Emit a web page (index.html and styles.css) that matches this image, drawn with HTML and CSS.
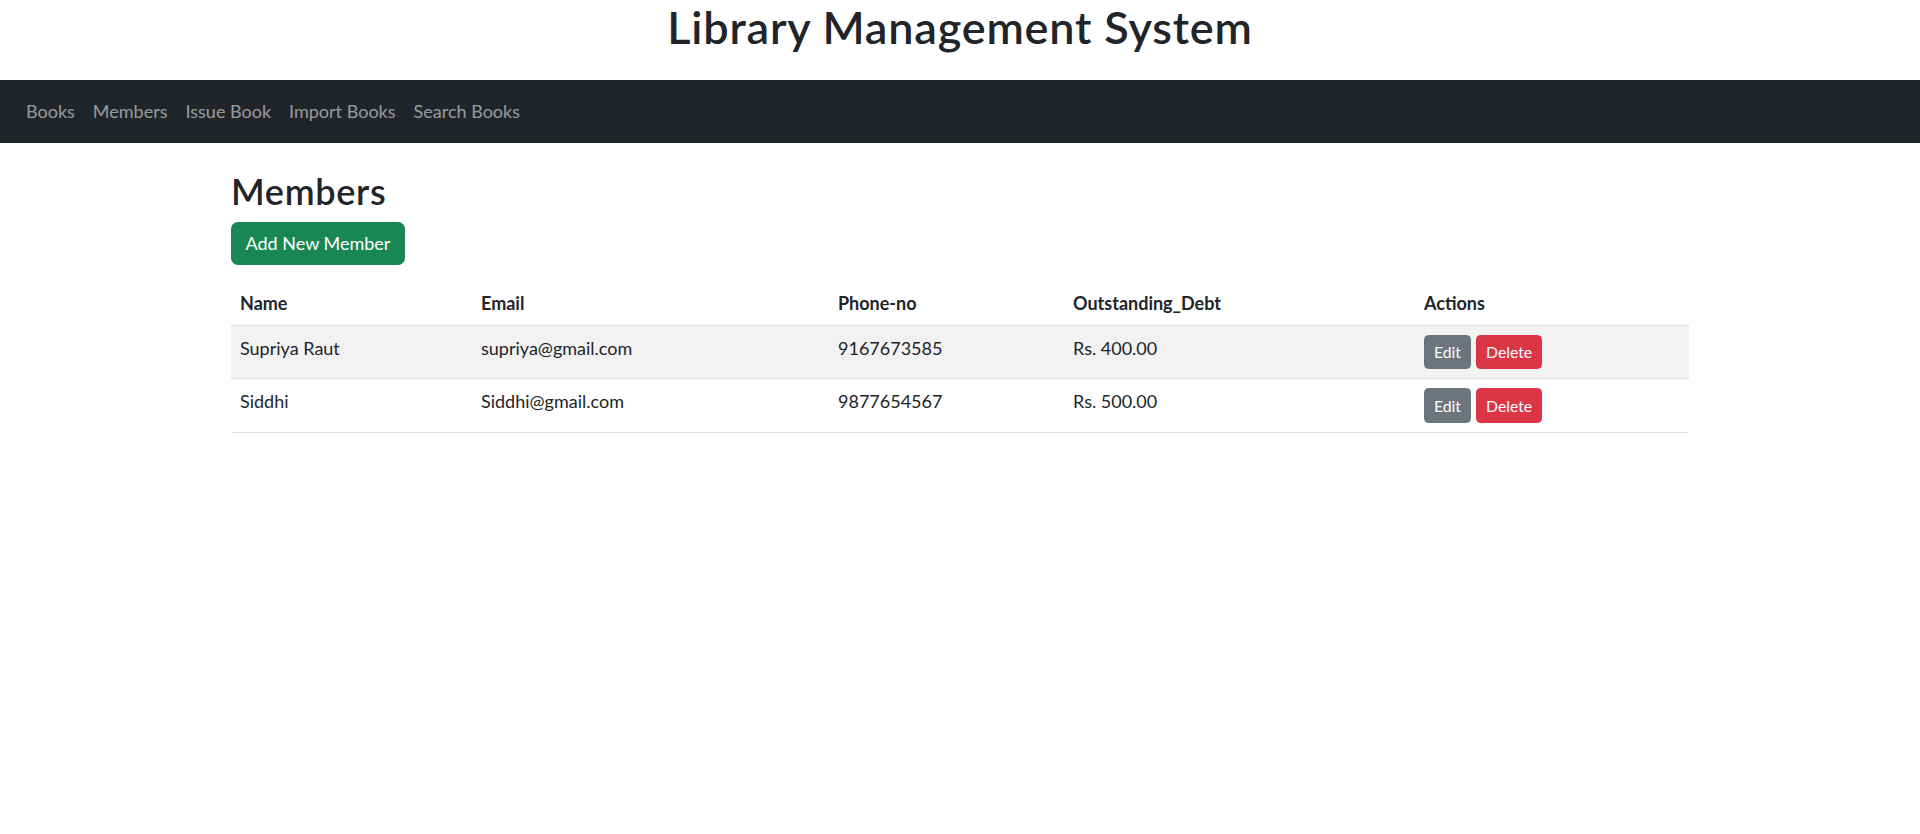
FILE: index.html
```html
<!DOCTYPE html>
<html lang="en">
<head>
<meta charset="utf-8">
<title>Library Management System</title>
<link rel="stylesheet" href="styles.css">
</head>
<body>
<header class="site-header">
  <h1 class="site-title">Library Management System</h1>
</header>
<nav class="navbar">
  <a class="nav-link" href="#">Books</a>
  <a class="nav-link" href="#">Members</a>
  <a class="nav-link" href="#">Issue Book</a>
  <a class="nav-link" href="#">Import Books</a>
  <a class="nav-link" href="#">Search Books</a>
</nav>
<main class="container">
  <h2 class="page-title">Members</h2>
  <a class="btn btn-success" href="#">Add New Member</a>
  <table class="table">
    <colgroup>
      <col class="col-name">
      <col class="col-email">
      <col class="col-phone">
      <col class="col-debt">
      <col class="col-actions">
    </colgroup>
    <thead>
      <tr>
        <th>Name</th>
        <th>Email</th>
        <th>Phone-no</th>
        <th>Outstanding_Debt</th>
        <th>Actions</th>
      </tr>
    </thead>
    <tbody>
      <tr class="striped">
        <td>Supriya Raut</td>
        <td>supriya@gmail.com</td>
        <td>9167673585</td>
        <td>Rs. 400.00</td>
        <td><div class="actions"><a class="btn btn-sm btn-secondary" href="#">Edit</a><a class="btn btn-sm btn-danger" href="#">Delete</a></div></td>
      </tr>
      <tr>
        <td>Siddhi</td>
        <td>Siddhi@gmail.com</td>
        <td>9877654567</td>
        <td>Rs. 500.00</td>
        <td><div class="actions"><a class="btn btn-sm btn-secondary" href="#">Edit</a><a class="btn btn-sm btn-danger" href="#">Delete</a></div></td>
      </tr>
    </tbody>
  </table>
</main>
</body>
</html>
```

FILE: styles.css
```css
* { box-sizing: border-box; }

html, body {
  margin: 0;
  padding: 0;
  background: #fff;
}

body {
  font-family: "Lato", "Noto Sans", "Liberation Sans", sans-serif;
  font-size: 18px;
  line-height: 1.5;
  color: #212529;
}

.site-header {
  text-align: center;
  padding-bottom: 26px;
}

.site-title {
  margin: 0;
  font-size: 45px;
  font-weight: 600;
  line-height: 54px;
  letter-spacing: 0.8px;
  color: #212529;
}

.navbar {
  display: flex;
  align-items: center;
  background: #212529;
  padding: 9px 17px;
}

.nav-link {
  display: block;
  padding: 9px 9px;
  line-height: 27px;
  font-size: 18px;
  color: rgba(255, 255, 255, 0.55);
  text-decoration: none;
}

.container {
  width: 1458px;
  margin: 0 auto;
}

.page-title {
  margin: 27px 0 9px;
  font-size: 36px;
  font-weight: 600;
  line-height: 43.2px;
  letter-spacing: 0.7px;
}

.btn {
  display: inline-block;
  padding: 6.75px 13.5px;
  font-size: 18px;
  line-height: 27px;
  border: 1px solid transparent;
  border-radius: 6.75px;
  color: #fff;
  text-decoration: none;
  vertical-align: top;
}

.btn-success {
  background: #198754;
  border-color: #198754;
}

.btn-sm {
  padding: 4.5px 9px;
  font-size: 15.75px;
  line-height: 23.6px;
  border-radius: 4.5px;
}

.btn-secondary {
  background: #6c757d;
  border-color: #6c757d;
}

.btn-danger {
  background: #dc3545;
  border-color: #dc3545;
}

.table {
  width: 100%;
  margin-top: 15px;
  border-collapse: collapse;
  table-layout: fixed;
}

.col-name { width: 241px; }
.col-email { width: 357px; }
.col-phone { width: 235px; }
.col-debt { width: 351px; }
.col-actions { width: 274px; }

.table th,
.table td {
  padding: 9px;
  text-align: left;
  vertical-align: top;
  border-bottom: 1px solid #dee2e6;
  line-height: 27px;
}

.table th {
  font-weight: 700;
  padding-top: 10.5px;
  padding-bottom: 7.5px;
}

.table tr.striped td {
  background: #f2f2f2;
}

.actions {
  display: flex;
  gap: 5px;
}
```
